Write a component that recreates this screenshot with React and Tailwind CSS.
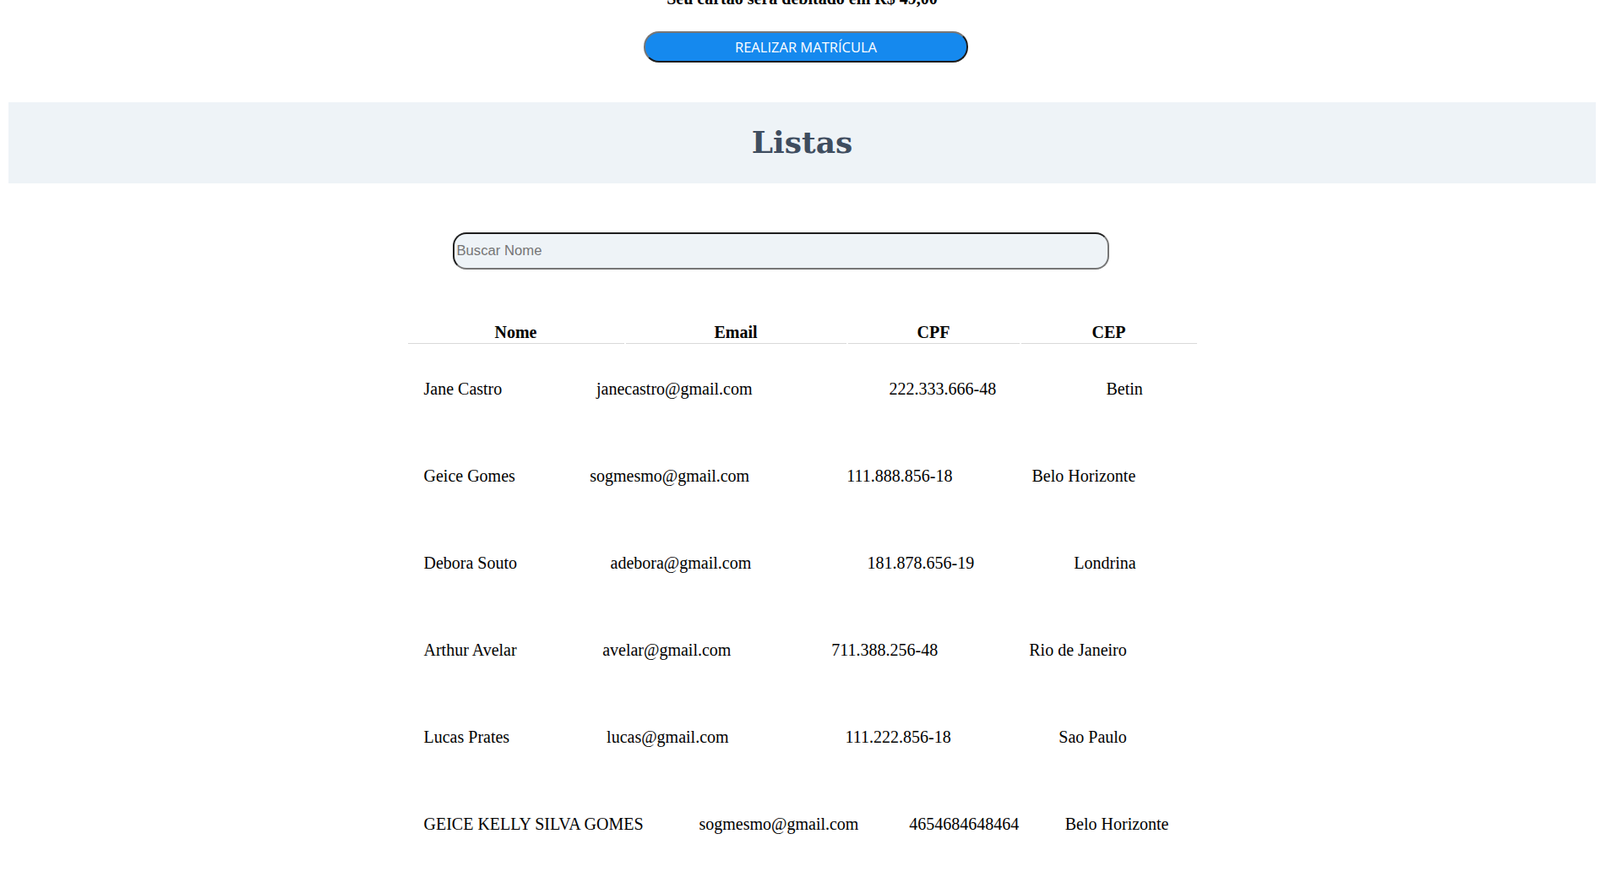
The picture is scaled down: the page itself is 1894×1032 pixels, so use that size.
export default function App() {
  const rows = [
    ["Jane Castro", "janecastro@gmail.com", "222.333.666-48", "Betin"],
    ["Geice Gomes", "sogmesmo@gmail.com", "111.888.856-18", "Belo Horizonte"],
    ["Debora Souto", "adebora@gmail.com", "181.878.656-19", "Londrina"],
    ["Arthur Avelar", "avelar@gmail.com", "711.388.256-48", "Rio de Janeiro"],
    ["Lucas Prates", "lucas@gmail.com", "111.222.856-18", "Sao Paulo"],
    ["GEICE KELLY SILVA GOMES", "sogmesmo@gmail.com", "4654684648464", "Belo Horizonte"],
  ];
  return (
    <div className="min-h-screen bg-white pl-[10px] pr-[5px] font-['Liberation_Serif',serif] text-black">
      <p className="mt-[-13px] text-center text-[20px] font-bold leading-[23px]">
        Seu cartão será debitado em R$ 49,00
      </p>
      <div className="mt-[27px] flex justify-center pl-[9px]">
        <button className="h-[37px] w-[384px] rounded-[18px] border-2 border-t-[#767676] border-l-[#767676] border-r-[#1d1d1d] border-b-[#1d1d1d] bg-[#1589ee] pt-[2px] font-['Open_Sans',sans-serif] text-[16.5px] leading-none text-white">
          REALIZAR MATRÍCULA
        </button>
      </div>
      <div className="mt-[47px] flex h-[96px] items-center justify-center bg-[#eef3f7] pb-[2px]">
        <h1 className="font-['DejaVu_Serif',serif] text-[36px] font-bold text-[#3f4d5f]">Listas</h1>
      </div>
      <input
        placeholder="Buscar Nome"
        className="ml-[526px] mt-[58px] block h-[44px] w-[777px] rounded-[16px] border-2 border-t-[#1e1e1e] border-l-[#1e1e1e] border-b-[#767676] border-r-[#767676] bg-[#eef3f7] px-[2.5px] font-['Liberation_Sans',sans-serif] text-[16.67px] text-black outline-none placeholder:text-[#757575]"
      />
      <table className="mx-auto mt-[60px] w-[938px] table-fixed border-separate border-spacing-[2px]">
        <thead>
          <tr>
            <th className="w-[256px] border-b border-[#d9d9d9] py-[1px] text-center text-[20px] font-bold leading-[23px]">Nome</th>
            <th className="w-[261px] border-b border-[#d9d9d9] py-[1px] text-center text-[20px] font-bold leading-[23px]">Email</th>
            <th className="w-[203px] border-b border-[#d9d9d9] py-[1px] text-center text-[20px] font-bold leading-[23px]">CPF</th>
            <th className="w-[208px] border-b border-[#d9d9d9] py-[1px] text-center text-[20px] font-bold leading-[23px]">CEP</th>
          </tr>
        </thead>
      </table>
      {rows.map((r, i) => (
        <table key={i} className="mx-auto w-[938px] border-separate border-spacing-[2px]">
          <tbody>
            <tr>
              {r.map((c, j) => (
                <td key={j} className="whitespace-nowrap px-[19px] py-[38px] text-left text-[20px] leading-[23px]">
                  {c}
                </td>
              ))}
            </tr>
          </tbody>
        </table>
      ))}
    </div>
  );
}
